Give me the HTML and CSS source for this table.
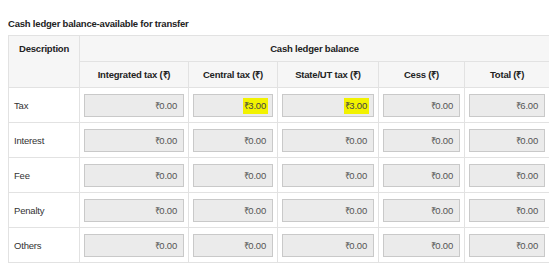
FILE: index.html
```html
<!DOCTYPE html>
<html lang="en">

<head>
    <meta charset="UTF-8">
    <meta name="viewport" content="width=device-width, initial-scale=1.0">
    <title>Cash ledger</title>
    <link rel="stylesheet" href="styles.css">
</head>

<body>
    <h4 class="caption">Cash ledger balance-available for transfer</h4>

    <table class="ledger">
        <colgroup>
            <col class="c-desc">
            <col class="c-igst">
            <col class="c-cgst">
            <col class="c-sgst">
            <col class="c-cess">
            <col class="c-total">
        </colgroup>
        <thead>
            <tr>
                <th rowspan="2" class="desc-head">Description</th>
                <th colspan="5">Cash ledger balance</th>
            </tr>
            <tr>
                <th>Integrated tax (₹)</th>
                <th>Central tax (₹)</th>
                <th>State/UT tax (₹)</th>
                <th>Cess (₹)</th>
                <th>Total (₹)</th>
            </tr>
        </thead>
        <tbody>
            <tr>
                <td>Tax</td>
                <td><div class="amount">₹0.00</div></td>
                <td><div class="amount"><mark>₹3.00</mark></div></td>
                <td><div class="amount"><mark>₹3.00</mark></div></td>
                <td><div class="amount">₹0.00</div></td>
                <td><div class="amount">₹6.00</div></td>
            </tr>
            <tr>
                <td>Interest</td>
                <td><div class="amount">₹0.00</div></td>
                <td><div class="amount">₹0.00</div></td>
                <td><div class="amount">₹0.00</div></td>
                <td><div class="amount">₹0.00</div></td>
                <td><div class="amount">₹0.00</div></td>
            </tr>
            <tr>
                <td>Fee</td>
                <td><div class="amount">₹0.00</div></td>
                <td><div class="amount">₹0.00</div></td>
                <td><div class="amount">₹0.00</div></td>
                <td><div class="amount">₹0.00</div></td>
                <td><div class="amount">₹0.00</div></td>
            </tr>
            <tr>
                <td>Penalty</td>
                <td><div class="amount">₹0.00</div></td>
                <td><div class="amount">₹0.00</div></td>
                <td><div class="amount">₹0.00</div></td>
                <td><div class="amount">₹0.00</div></td>
                <td><div class="amount">₹0.00</div></td>
            </tr>
            <tr>
                <td>Others</td>
                <td><div class="amount">₹0.00</div></td>
                <td><div class="amount">₹0.00</div></td>
                <td><div class="amount">₹0.00</div></td>
                <td><div class="amount">₹0.00</div></td>
                <td><div class="amount">₹0.00</div></td>
            </tr>
        </tbody>
    </table>
</body>

</html>
```

FILE: styles.css
```css
body {
    margin: 8px;
    background: #ffffff;
    font-family: "Liberation Sans", Arial, sans-serif;
    font-size: 9.5px;
    letter-spacing: -0.2px;
    color: #333333;
}

.caption {
    margin: 10px 0 5px 0;
    font-size: 9.5px;
    line-height: 12px;
    font-weight: bold;
    color: #222222;
}

.ledger {
    width: 541px;
    border-collapse: collapse;
    table-layout: fixed;
}

.c-desc { width: 71px; }
.c-igst { width: 109px; }
.c-cgst { width: 89px; }
.c-sgst { width: 101px; }
.c-cess { width: 86px; }
.c-total { width: 85px; }

.ledger th,
.ledger td {
    border: 1px solid #e2e2e2;
}

.ledger th {
    height: 25px;
    padding: 0 4px;
    background: #f6f6f6;
    font-weight: bold;
    color: #222222;
    text-align: center;
    vertical-align: middle;
}

/* description header spans both header rows but sits on the first line */
.ledger th.desc-head {
    vertical-align: top;
    padding-top: 7px;
}

.ledger td {
    height: 34px;
    padding: 0 4px;
    vertical-align: middle;
}

.ledger td:first-child {
    padding-left: 5px;
}

.amount {
    height: 21px;
    line-height: 21px;
    padding: 0 6px;
    background: #ebebeb;
    border: 1px solid #c9c9c9;
    text-align: right;
    color: #555555;
}

.amount mark {
    background: #f2f200;
    color: #444444;
    padding: 2px 2px 3px 1px;
    margin-right: -2px;
}
```
